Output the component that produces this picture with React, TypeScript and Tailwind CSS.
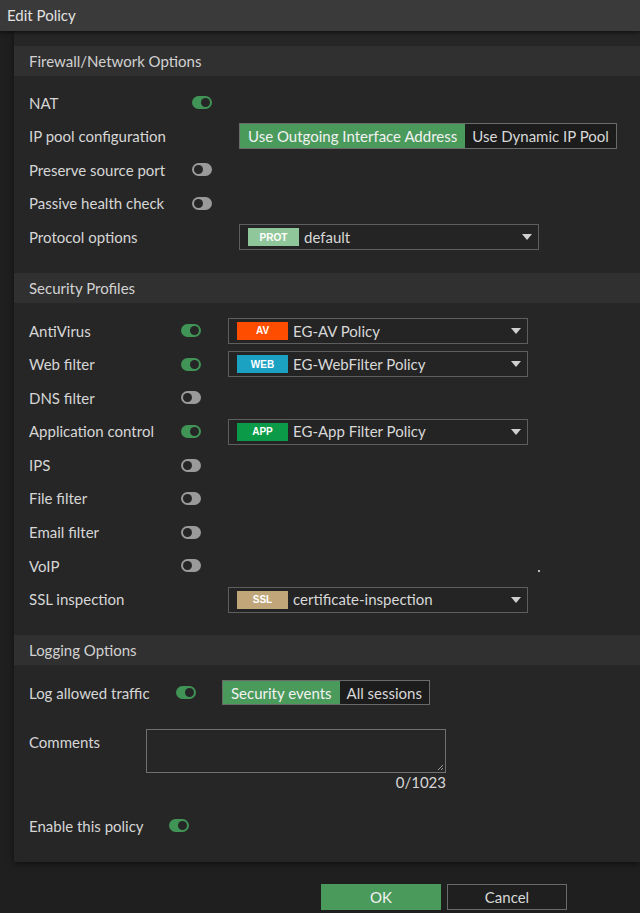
import React from "react";

const font = { fontFamily: "Lato, 'Open Sans', sans-serif" };

function Toggle({ on }: { on: boolean }) {
  return (
    <span
      className={`relative inline-flex h-[13px] w-[20px] shrink-0 items-center rounded-full ${
        on ? "bg-[#3f9456] justify-end" : "bg-[#9a9a9a] justify-start"
      } px-[2px]`}
    >
      <span className="block h-[9px] w-[9px] rounded-full bg-[#262626]" />
    </span>
  );
}

function Caret() {
  return (
    <svg width="10" height="6" viewBox="0 0 10 6" className="shrink-0">
      <path d="M0 0 L10 0 L5 6 Z" fill="#d0d0d0" />
    </svg>
  );
}

function Select({
  tag,
  color,
  value,
  width,
}: {
  tag: string;
  color: string;
  value: string;
  width: string;
}) {
  return (
    <div
      className={`flex h-[26px] ${width} items-center border border-[#5e5e5e] bg-[#242424] pl-[8px] pr-[6px]`}
    >
      <span
        className={`flex h-[18px] w-[51px] shrink-0 items-center justify-center text-[10px] font-bold text-white ${color}`}
        style={{ fontFamily: "'Liberation Sans', Arial, sans-serif" }}
      >
        {tag}
      </span>
      <span className="ml-[5px] flex-1 truncate text-[15px] text-[#d8d8d8]">{value}</span>
      <Caret />
    </div>
  );
}

function SectionHeader({ title }: { title: string }) {
  return (
    <div className="flex h-[30px] items-center bg-[#303030] pl-[15px] text-[15px] text-[#d2d2d2]">
      {title}
    </div>
  );
}

function Row({ children }: { children: React.ReactNode }) {
  return <div className="flex h-[33.6px] items-center pl-[15px]">{children}</div>;
}

function Label({ w, children }: { w: string; children: React.ReactNode }) {
  return <span className={`${w} shrink-0 text-[15px] text-[#d6d6d6]`}>{children}</span>;
}

const security = [
  { label: "AntiVirus", on: true, tag: "AV", color: "bg-[#ff4d00]", value: "EG-AV Policy" },
  { label: "Web filter", on: true, tag: "WEB", color: "bg-[#1ba2c3]", value: "EG-WebFilter Policy" },
  { label: "DNS filter", on: false },
  { label: "Application control", on: true, tag: "APP", color: "bg-[#0b9a48]", value: "EG-App Filter Policy" },
  { label: "IPS", on: false },
  { label: "File filter", on: false },
  { label: "Email filter", on: false },
  { label: "VoIP", on: false, dot: true },
  { label: "SSL inspection", ssl: true, tag: "SSL", color: "bg-[#c1a679]", value: "certificate-inspection" },
];

export default function App() {
  return (
    <div className="flex h-[913px] w-[640px] flex-col overflow-hidden bg-[#1f1f1f]" style={font}>
      <div className="relative z-10 flex h-[31px] shrink-0 items-center bg-[#3a3a3a] pl-[7px] text-[15px] text-[#e2e2e2] shadow-[0_2px_4px_rgba(0,0,0,0.5)]">
        Edit Policy
      </div>

      <div className="flex pl-[14px]">
        <div className="flex h-[831px] flex-1 flex-col bg-[#262626] pt-[15px] shadow-[0_2px_6px_rgba(0,0,0,0.5)]">
          <SectionHeader title="Firewall/Network Options" />
          <div className="pt-[10px] pb-[19px]">
            <Row>
              <Label w="w-[163px]">NAT</Label>
              <Toggle on />
            </Row>
            <Row>
              <Label w="w-[210px]">IP pool configuration</Label>
              <div className="flex h-[26px] border border-[#6a6a6a] text-[15px]">
                <span className="flex items-center bg-[#4a9a5c] px-[8px] text-[#f2f2f2]">
                  Use Outgoing Interface Address
                </span>
                <span className="flex items-center bg-[#1c1c1c] px-[7px] text-[#d8d8d8]">
                  Use Dynamic IP Pool
                </span>
              </div>
            </Row>
            <Row>
              <Label w="w-[163px]">Preserve source port</Label>
              <Toggle on={false} />
            </Row>
            <Row>
              <Label w="w-[163px]">Passive health check</Label>
              <Toggle on={false} />
            </Row>
            <Row>
              <Label w="w-[210px]">Protocol options</Label>
              <Select tag="PROT" color="bg-[#8fc79a]" value="default" width="w-[300px]" />
            </Row>
          </div>

          <SectionHeader title="Security Profiles" />
          <div className="pt-[11px] pb-[18.6px]">
            {security.map((s) => (
              <Row key={s.label}>
                {s.ssl ? (
                  <Label w="w-[199px]">{s.label}</Label>
                ) : (
                  <>
                    <Label w="w-[152px]">{s.label}</Label>
                    <Toggle on={!!s.on} />
                    <span className="w-[27px] shrink-0" />
                  </>
                )}
                {s.tag && (
                  <Select tag={s.tag} color={s.color!} value={s.value!} width="w-[300px]" />
                )}
                {s.dot && (
                  <span className="ml-[310px] mt-[10px] h-[2px] w-[2px] bg-[#bdbdbd]" />
                )}
              </Row>
            ))}
          </div>

          <SectionHeader title="Logging Options" />
          <div className="pt-[11px]">
            <div className="flex h-[34px] items-center pl-[15px]">
              <Label w="w-[147px]">Log allowed traffic</Label>
              <Toggle on />
              <span className="w-[26px] shrink-0" />
              <div className="flex h-[25px] border border-[#6a6a6a] text-[15px]">
                <span className="flex items-center bg-[#4a9a5c] px-[8px] text-[#f2f2f2]">
                  Security events
                </span>
                <span className="flex items-center bg-[#1c1c1c] px-[7px] text-[#d8d8d8]">
                  All sessions
                </span>
              </div>
            </div>
            <div className="mt-[19px] flex pl-[15px]">
              <Label w="w-[117px] pt-[2px]">Comments</Label>
              <div className="flex flex-col items-end">
                <div className="relative h-[44px] w-[300px] border border-[#707070] bg-[#262626]">
                  <svg width="7" height="7" viewBox="0 0 7 7" className="absolute bottom-[1px] right-[1px]">
                    <path d="M6 1 L1 6 M6 4 L4 6" stroke="#9a9a9a" strokeWidth="1" />
                  </svg>
                </div>
                <span className="text-[15px] leading-[18px] text-[#d6d6d6]">0/1023</span>
              </div>
            </div>
            <div className="mt-[18px] flex h-[34px] items-center pl-[15px]">
              <Label w="w-[140px]">Enable this policy</Label>
              <Toggle on />
            </div>
          </div>
        </div>
      </div>

      <div className="flex justify-end gap-[6px] pr-[73px] pt-[22px]">
        <button className="h-[26px] w-[120px] bg-[#4a9a5c] text-[15px] text-[#f2f2f2]">OK</button>
        <button className="h-[26px] w-[120px] border border-[#6a6a6a] bg-[#1f1f1f] text-[15px] text-[#d8d8d8]">
          Cancel
        </button>
      </div>
    </div>
  );
}
